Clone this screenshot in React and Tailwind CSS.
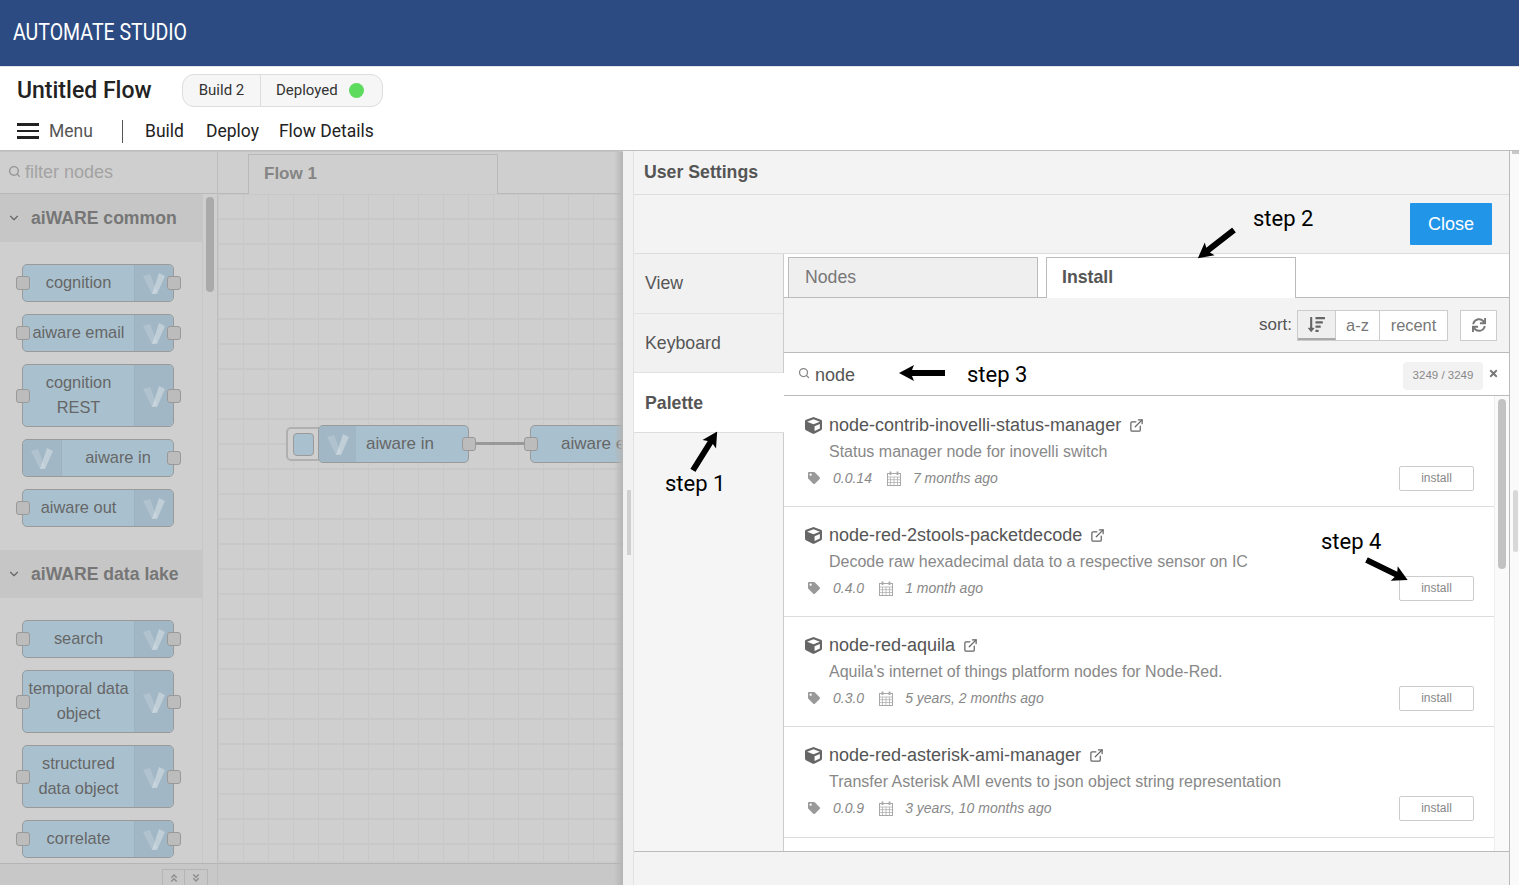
import { FaCube, FaTag, FaSync, FaSortAmountDown, FaTimes, FaAngleDoubleUp, FaAngleDoubleDown } from "react-icons/fa";
import { ChevronDown, ExternalLink, Search } from "lucide-react";

const commonNodes = [
  { lines: ["cognition"], both: true },
  { lines: ["aiware email"], both: true },
  { lines: ["cognition", "REST"], both: true },
  { lines: ["aiware in"], input: true },
  { lines: ["aiware out"], out: true },
];

const lakeNodes = [
  { lines: ["search"], both: true },
  { lines: ["temporal data", "object"], both: true },
  { lines: ["structured", "data object"], both: true },
  { lines: ["correlate"], both: true },
];

const packages = [
  { name: "node-contrib-inovelli-status-manager", desc: "Status manager node for inovelli switch", version: "0.0.14", updated: "7 months ago", h: "h-[110px]", btn: "bottom-[15px]" },
  { name: "node-red-2stools-packetdecode", desc: "Decode raw hexadecimal data to a respective sensor on IC", version: "0.4.0", updated: "1 month ago", h: "h-[110px]", btn: "bottom-[15px]" },
  { name: "node-red-aquila", desc: "Aquila's internet of things platform nodes for Node-Red.", version: "0.3.0", updated: "5 years, 2 months ago", h: "h-[110px]", btn: "bottom-[15px]" },
  { name: "node-red-asterisk-ami-manager", desc: "Transfer Asterisk AMI events to json object string representation", version: "0.0.9", updated: "3 years, 10 months ago", h: "h-[111px]", btn: "bottom-[16px]" },
];

function Logo() {
  return (
    <svg width="24" height="24" viewBox="0 0 24 24">
      <path d="M1 5 L8 3 L15 21 L10 23 Z" fill="#ffffff" fillOpacity="0.16" />
      <path d="M10 23 L17 2 L23 5 L15 23 Z" fill="#ffffff" fillOpacity="0.32" />
    </svg>
  );
}

function Port({ className }) {
  return <div className={`absolute top-1/2 -translate-y-1/2 w-[14px] h-[14px] rounded-[3px] bg-[#bcbcbc] border border-[#999999] ${className}`} />;
}

function PaletteNode({ node }) {
  const hasLeft = node.both || node.out;
  const hasRight = node.both || node.input;
  return (
    <div className={`relative w-[152px] ${node.lines.length > 1 ? "h-[63px]" : "h-[38px]"} flex rounded-[5px] border border-[#9a9a9a] bg-[#a9c1cf] text-[#666666] text-[16.4px] leading-[25px]`}>
      {node.input && (
        <div className="w-[39px] shrink-0 bg-[#a1b7c5] border-r border-[#9db2bf] rounded-l-[5px] flex items-center justify-center">
          <Logo />
        </div>
      )}
      <div className={`flex-1 min-w-0 flex flex-col items-center justify-center whitespace-nowrap pb-[2px] ${node.input ? "pl-[1px]" : ""}`}>
        {node.lines.map((line) => (
          <span key={line}>{line}</span>
        ))}
      </div>
      {!node.input && (
        <div className="w-[39px] shrink-0 bg-[#a1b7c5] border-l border-[#9db2bf] rounded-r-[5px] flex items-center justify-center">
          <Logo />
        </div>
      )}
      {hasLeft && <Port className="-left-[7px]" />}
      {hasRight && <Port className="-right-[8px]" />}
    </div>
  );
}

function Category({ title, nodes, className }) {
  return (
    <div>
      <div className="h-[48px] bg-[#c6c6c6] flex items-center pl-[7px] text-[#767676] font-bold text-[17.6px]">
        <ChevronDown size={14} strokeWidth={2} className="mr-[10px] text-[#666666]" />
        {title}
      </div>
      <div className={`flex flex-col gap-[12px] pl-[22px] pt-[22px] ${className}`}>
        {nodes.map((node) => (
          <PaletteNode key={node.lines.join(" ")} node={node} />
        ))}
      </div>
    </div>
  );
}

function CalendarIcon() {
  return (
    <svg width="14" height="15" viewBox="0 0 14 15" fill="none" stroke="#a8a8a8">
      <rect x="0.5" y="2.5" width="13" height="12" />
      <path d="M0.5 6h13M0.5 8.7h13M0.5 11.5h13M3.5 6v8.5M7 6v8.5M10.5 6v8.5" strokeWidth="0.7" />
      <path d="M3.5 0.5v3.5M10.5 0.5v3.5" strokeWidth="1.8" />
    </svg>
  );
}

function PackageRow({ pkg }) {
  return (
    <div className={`relative ${pkg.h} shrink-0 border-b border-[#dddddd] pl-[21px] pt-[16px] pr-[20px]`}>
      <div className="flex items-center h-[24px] text-[18px] text-[#555555]">
        <FaCube size={17} className="text-[#666666] mr-[7px]" />
        {pkg.name}
        <ExternalLink size={15} className="ml-[8px] text-[#666666]" />
      </div>
      <div className="mt-[3px] pl-[24px] h-[24px] leading-[24px] text-[16px] text-[#888888]">{pkg.desc}</div>
      <div className="mt-[2px] flex items-center h-[24px] text-[14px] italic text-[#888888]">
        <FaTag size={12} className="text-[#999999] ml-[3px] mr-[13px]" />
        <span className="mr-[15px]">{pkg.version}</span>
        <CalendarIcon />
        <span className="ml-[12px]">{pkg.updated}</span>
      </div>
      <button className={`absolute right-[20px] ${pkg.btn} w-[75px] h-[25px] pb-[2px] bg-white border border-[#cccccc] rounded-[2px] text-[12px] text-[#888888]`}>
        install
      </button>
    </div>
  );
}

function Arrow({ className, rotate }) {
  return (
    <svg width="46" height="22" viewBox="0 0 46 22" className={`absolute ${className} ${rotate}`}>
      <path d="M0 11 L15 3 L13 8 L46 8 L46 14 L13 14 L15 19 Z" fill="#000000" />
    </svg>
  );
}

function Step({ children, className }) {
  return <div className={`absolute text-[22px] leading-none text-black font-['Roboto'] ${className}`}>{children}</div>;
}

export default function App() {
  return (
    <div className="relative h-screen w-full overflow-hidden bg-white font-['Liberation_Sans',Arial,sans-serif] flex flex-col">
      <header className="h-[67px] shrink-0 bg-[#2c4b82] border-b border-[#dfe3ea] flex items-center pl-[13px] text-white text-[23px] font-['Roboto',sans-serif]">
        <span className="origin-left scale-x-[0.85] whitespace-nowrap">AUTOMATE STUDIO</span>
      </header>

      <div className="h-[84px] shrink-0 bg-white font-['Roboto',sans-serif] border-b border-[#bdbdbd]">
        <div className="flex items-center h-[47px] pl-[17px]">
          <div className="text-[23px] font-medium text-[#222222] w-[165px] pt-[2px]">Untitled Flow</div>
          <div className="flex h-[33px] rounded-[12px] border border-[#dddddd] bg-[#f6f6f6] text-[15px] text-[#333333] items-center">
            <div className="w-[78px] h-full flex items-center justify-center border-r border-[#dddddd]">Build 2</div>
            <div className="flex items-center pl-[15px] pr-[18px]">
              Deployed
              <span className="ml-[11px] w-[15px] h-[15px] rounded-full bg-[#5cdb5c]" />
            </div>
          </div>
        </div>
        <div className="flex items-center h-[34px] pl-[17px] text-[17.5px] text-[#222222]">
          <div className="w-[22px] flex flex-col gap-[4px] mr-[10px]">
            <div className="h-[2.5px] bg-[#222222]" />
            <div className="h-[2.5px] bg-[#222222]" />
            <div className="h-[2.5px] bg-[#222222]" />
          </div>
          <span className="text-[#555555] w-[73px]">Menu</span>
          <div className="w-px h-[23px] bg-[#555555] mr-[22px]" />
          <span className="mr-[22px]">Build</span>
          <span className="mr-[20px]">Deploy</span>
          <span>Flow Details</span>
        </div>
      </div>

      <div className="flex-1 min-h-0 flex">
        {/* dimmed editor */}
        <div className="relative w-[623px] shrink-0 flex bg-[#cfcfcf] border-t border-[#c4c4c4]">
          <aside className="w-[218px] shrink-0 flex flex-col border-r border-[#bebebe]">
            <div className="h-[42px] shrink-0 flex items-center pl-[8px] border-b border-[#b9b9b9] text-[18px] text-[#a3a3a3]">
              <Search size={13} strokeWidth={2.5} className="mr-[4px] -mt-[3px] text-[#959595]" />
              filter nodes
            </div>
            <div className="flex-1 min-h-0 flex">
              <div className="w-[203px] shrink-0 overflow-hidden border-r border-[#c7c7c7]">
                <Category title="aiWARE common" nodes={commonNodes} className="pb-[23px]" />
                <Category title="aiWARE data lake" nodes={lakeNodes} className="pb-[5px]" />
              </div>
              <div className="flex-1 pt-[3px] pl-[3px]">
                <div className="w-[8px] h-[95px] rounded-full bg-[#aaaaaa]" />
              </div>
            </div>
            <div className="h-[22px] shrink-0 border-t border-[#b5b5b5] bg-[#c8c8c8] flex justify-end pt-[5px] pr-[9px]">
              <div className="w-[23px] border border-[#b5b5b5] border-b-0 flex justify-center pt-[3px]">
                <FaAngleDoubleUp size={10} className="text-[#8f8f8f]" />
              </div>
              <div className="w-[23px] border border-l-0 border-[#b5b5b5] border-b-0 flex justify-center pt-[3px]">
                <FaAngleDoubleDown size={10} className="text-[#8f8f8f]" />
              </div>
            </div>
          </aside>

          <div className="flex-1 min-w-0 flex flex-col">
            <div className="h-[42px] shrink-0 flex items-end pl-[30px] border-b border-[#b9b9b9]">
              <div className="relative -mb-px w-[250px] h-[40px] bg-[#cfcfcf] border border-b-0 border-[#b9b9b9] flex items-center pl-[15px] pb-[2px] text-[17px] font-bold text-[#858585]">
                Flow 1
              </div>
            </div>
            <div className="relative flex-1 min-h-0 overflow-hidden bg-[#cfcfcf] bg-[linear-gradient(to_right,#c8c8c8_1px,transparent_1px),linear-gradient(to_bottom,#c8c8c8_2px,transparent_2px)] bg-[size:25px_25px] bg-[position:0_24px]">
              <div className="absolute left-[68px] top-[233px] w-[36px] h-[34px] rounded-[5px] border-2 border-[#b0b0b0] bg-[#cfcfcf]">
                <div className="absolute left-[5px] top-[4px] w-[21px] h-[23px] rounded-[4px] border border-[#9a9a9a] bg-[#a9c1cf]" />
              </div>
              <div className="absolute left-[100px] top-[231px] w-[151px] h-[38px] flex rounded-[5px] border border-[#9a9a9a] bg-[#a9c1cf] text-[17px] text-[#666666]">
                <div className="w-[37px] shrink-0 bg-[#a1b7c5] rounded-l-[5px] flex items-center justify-center">
                  <Logo />
                </div>
                <div className="flex-1 flex items-center justify-center pr-[24px] whitespace-nowrap">aiware in</div>
                <Port className="-right-[8px]" />
              </div>
              <div className="absolute left-[257px] top-[248px] w-[50px] h-[3px] bg-[#999999]" />
              <div className="absolute left-[312px] top-[231px] w-[120px] h-[38px] flex items-center rounded-[5px] border border-[#9a9a9a] bg-[#a9c1cf] text-[17px] text-[#666666] pl-[30px] whitespace-nowrap">
                aiware email
                <Port className="-left-[7px]" />
              </div>
              <div className="absolute left-0 right-0 bottom-[12px] h-[12px] bg-[#cbcbcb] pt-[3px] pl-[3px]">
                <div className="w-[255px] h-[8px] rounded-full bg-[#aaaaaa]" />
              </div>
              <div className="absolute left-0 right-0 bottom-0 h-[22px] bg-[#c8c8c8] border-t border-[#b5b5b5]" />
            </div>
          </div>
          <div className="absolute top-0 bottom-0 right-0 w-[9px] bg-gradient-to-r from-transparent to-[#b4b4b4]" />
        </div>

        {/* settings panel shadow strip */}
        <div className="w-[11px] shrink-0 bg-[#f1f1f1] border-r border-[#e2e2e2] flex items-center pl-[4px]">
          <div className="mt-[8px] w-[4px] h-[65px] bg-[#d0d0d0]" />
        </div>

        <div className="flex-1 min-w-0 flex flex-col border-r border-[#bbbbbb] bg-[#f3f3f3] text-[#555555]">
          <div className="h-[44px] shrink-0 flex items-center pl-[10px] border-b border-[#dddddd] text-[17.7px] font-bold">User Settings</div>
          <div className="h-[59px] shrink-0 flex items-start justify-end pt-[8px] pr-[17px] border-b border-[#dddddd]">
            <button className="w-[82px] h-[42px] bg-[#2196e8] rounded-[1px] text-[18px] text-white pt-[1px]">Close</button>
          </div>

          <div className="flex-1 min-h-0 flex border-b border-[#bbbbbb]">
            <nav className="w-[150px] shrink-0 bg-[#f5f5f5] border-r border-[#cccccc] text-[17.7px]">
              <div className="h-[60px] flex items-center pl-[11px] bg-[#f1f1f1] border-b border-[#e2e2e2]">View</div>
              <div className="h-[59px] flex items-center pl-[11px] bg-[#f1f1f1] border-b border-[#e2e2e2]">Keyboard</div>
              <div className="h-[60px] -mr-px relative flex items-center pl-[11px] pt-[2px] bg-white font-bold border-b border-[#dddddd]">Palette</div>
            </nav>

            <div className="flex-1 min-w-0 flex flex-col">
              <div className="h-[44px] shrink-0 flex items-end gap-[8px] pl-[4px] bg-white border-b border-[#bbbbbb]">
                <div className="w-[250px] h-[40px] flex items-center pl-[16px] bg-[#efefef] border border-b-0 border-[#bbbbbb] text-[17.7px] text-[#777777]">Nodes</div>
                <div className="relative -mb-px w-[250px] h-[41px] flex items-center pl-[15px] pb-[2px] bg-white border border-b-0 border-[#bbbbbb] text-[17.7px] font-bold">Install</div>
              </div>

              <div className="h-[55px] shrink-0 flex items-center justify-end pr-[12px] border-b border-[#bbbbbb] text-[16.4px]">
                <span className="mr-[5px] text-[17px]">sort:</span>
                <div className="flex h-[31px] border border-[#cccccc] bg-white text-[#777777]">
                  <div className="w-[38px] flex items-center justify-center bg-[#efefef] border-b-2 border-b-[#aaaaaa] border-r border-r-[#cccccc]">
                    <FaSortAmountDown size={17} className="text-[#666666]" />
                  </div>
                  <div className="w-[44px] flex items-center justify-center border-r border-[#cccccc]">a-z</div>
                  <div className="w-[67px] flex items-center justify-center">recent</div>
                </div>
                <div className="ml-[12px] w-[37px] h-[31px] border border-[#cccccc] bg-white flex items-center justify-center">
                  <FaSync size={14} className="text-[#777777]" />
                </div>
              </div>

              <div className="h-[43px] shrink-0 relative flex items-center bg-white border-b border-[#bbbbbb] pl-[14px] text-[18px] text-[#555555]">
                <Search size={12} strokeWidth={2.5} className="text-[#888888] mr-[5px] -mt-[3px]" />
                <span className="pt-[3px]">node</span>
                <div className="ml-auto mr-[26px] mt-[3px] w-[80px] h-[28px] rounded-[4px] bg-[#f2f2f2] flex items-center justify-center text-[11.5px] text-[#888888]">3249 / 3249</div>
                <FaTimes size={11} className="absolute right-[10px] top-[15px] text-[#777777]" />
              </div>

              <div className="flex-1 min-h-0 flex bg-white overflow-hidden">
                <div className="flex-1 min-w-0 flex flex-col overflow-hidden pt-[1px]">
                  {packages.map((pkg) => (
                    <PackageRow key={pkg.name} pkg={pkg} />
                  ))}
                </div>
                <div className="w-[15px] shrink-0 bg-[#fafafa] border-l border-[#eeeeee] pt-[3px] pl-[3px]">
                  <div className="w-[8px] h-[170px] rounded-full bg-[#c2c2c2]" />
                </div>
              </div>
            </div>
          </div>

          <div className="h-[33px] shrink-0" />
        </div>

        {/* page scrollbar */}
        <div className="w-[9px] shrink-0 bg-[#fafafa] pl-[3px] relative">
          <div className="absolute top-0 left-[2px] right-0 h-[3px] bg-[#c8c8c8]" />
          <div className="absolute top-[339px] left-[3px] w-[5px] h-[62px] bg-[#d8d8d8] rounded-full" />
        </div>
      </div>

      {/* annotations */}
      <Step className="left-[665px] top-[473px]">step 1</Step>
      <Arrow className="left-[682px] top-[440px]" rotate="rotate-[122deg]" />
      <Step className="left-[1253px] top-[208px]">step 2</Step>
      <Arrow className="left-[1193px] top-[233px]" rotate="-rotate-[38deg]" />
      <Step className="left-[967px] top-[364px]">step 3</Step>
      <Arrow className="left-[899px] top-[362px]" />
      <Step className="left-[1321px] top-[531px]">step 4</Step>
      <Arrow className="left-[1364px] top-[559px]" rotate="rotate-[206deg]" />
    </div>
  );
}
